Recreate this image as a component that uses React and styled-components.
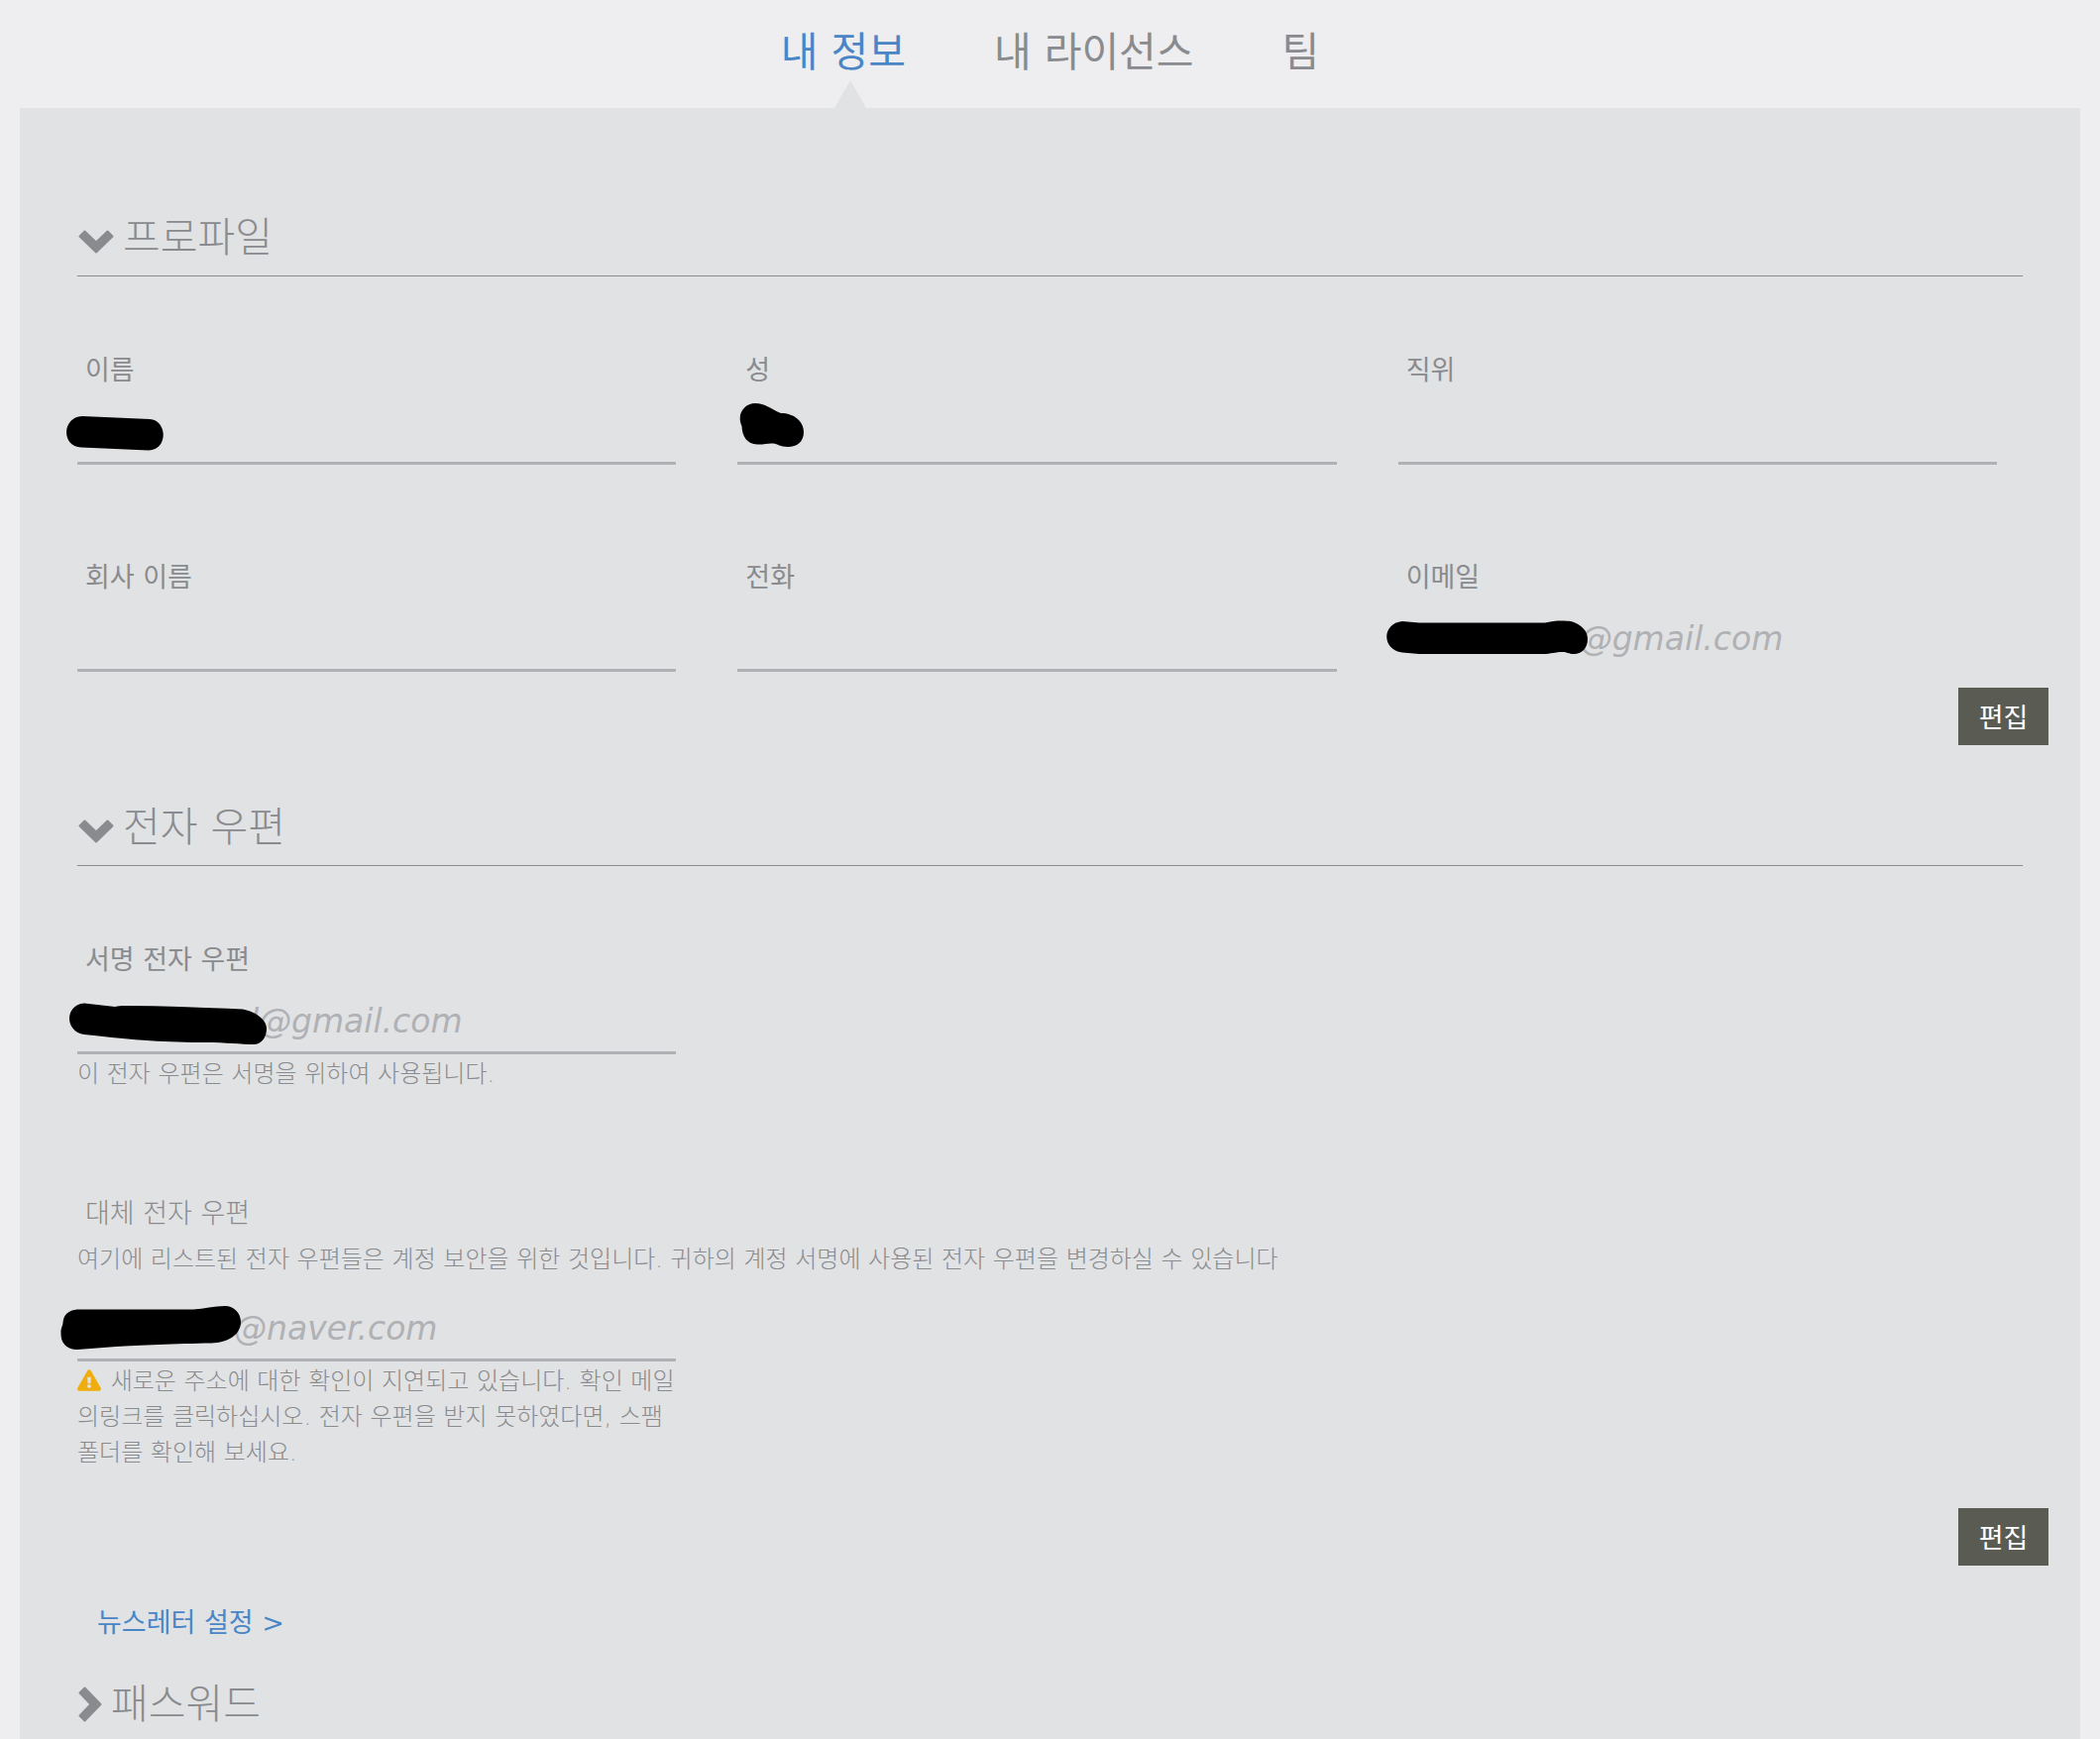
import React, { useState } from "react";
import styled, { createGlobalStyle } from "styled-components";
import { FaExclamationTriangle } from "react-icons/fa";

const colors = {
  page: "#eeeef0",
  panel: "#e1e2e4",
  text: "#8a8b8e",
  value: "#b0b1b4",
  rule: "#8a8b8e",
  link: "#4a86c5",
  button: "#5a5c54",
  warning: "#f0ad0e",
};

const GlobalStyle = createGlobalStyle`
  *, *::before, *::after { box-sizing: border-box; }
  body {
    margin: 0;
    background: ${colors.page};
    color: ${colors.text};
    font-family: "DejaVu Sans", "Noto Sans CJK KR", sans-serif;
    font-size: 24px;
    line-height: 36px;
  }
`;

const Page = styled.div`
  display: flex;
  flex-direction: column;
  min-height: 100vh;
  padding: 0 20px;
`;

const TabBar = styled.nav`
  display: flex;
  justify-content: center;
  gap: 89px;
  height: 109px;
  padding-top: 29px;
`;

const Tab = styled.a`
  position: relative;
  color: ${(p) => (p.$active ? colors.link : colors.text)};
  font-size: 41px;
  line-height: 48px;
  text-decoration: none;

  &::after {
    content: "";
    display: ${(p) => (p.$active ? "block" : "none")};
    position: absolute;
    left: 54px;
    bottom: 0;
    border: 16px solid transparent;
    border-top: 0;
    border-bottom: 28px solid ${colors.panel};
  }
`;

const Panel = styled.main`
  flex: 1;
  padding: 107px 22px 0 58px;
  background: ${colors.panel};
`;

const Section = styled.section`
  margin-top: ${(p) => p.$gap || 0}px;
`;

const SectionHeading = styled.h2`
  margin: 0 36px 0 0;
  padding-bottom: ${(p) => (p.$open ? 14 : 0)}px;
  border-bottom: ${(p) => (p.$open ? `1px solid ${colors.rule}` : "0")};
  font-weight: 300;
`;

const Toggle = styled.button`
  display: flex;
  align-items: center;
  gap: 9px;
  padding: 0 0 0 1px;
  border: 0;
  background: none;
  color: inherit;
  font: inherit;
  font-size: 41px;
  line-height: 48px;
  cursor: pointer;
`;

const ChevronSvg = styled.svg`
  display: block;
  flex: none;
  margin-top: ${(p) => (p.$down ? 8 : 0)}px;
  fill: currentColor;
  stroke: currentColor;
  stroke-width: 2;
  stroke-linejoin: round;
`;

const Fields = styled.div`
  display: grid;
  grid-template-columns: repeat(3, 1fr);
  row-gap: 96px;
  padding-top: ${(p) => p.$top || 0}px;
`;

const FieldBox = styled.div`
  padding-right: 62px;
`;

const Label = styled.label`
  display: block;
  padding-left: 8px;
  font-size: 27px;
  font-weight: ${(p) => (p.$light ? 300 : 400)};
`;

const InputWrap = styled.div`
  position: relative;
  margin-top: ${(p) => p.$gap}px;
`;

const Input = styled.input`
  display: block;
  width: 100%;
  height: 65px;
  padding: 0 0 0 ${(p) => p.$indent || 0}px;
  border: 0;
  border-bottom: 3px solid ${(p) => (p.$plain ? "transparent" : colors.value)};
  outline: 0;
  background: transparent;
  color: ${colors.value};
  font-family: inherit;
  font-size: 33px;
  font-style: italic;
`;

const Mask = styled.svg`
  position: absolute;
  left: -20px;
  top: 0;
  pointer-events: none;
`;

const Note = styled.p`
  margin: ${(p) => p.$gap}px 0 0;
  font-weight: 300;
`;

const WarningIcon = styled(FaExclamationTriangle)`
  width: 24px;
  height: 22px;
  margin-right: 2px;
  vertical-align: -2px;
  color: ${colors.warning};
`;

const Actions = styled.div`
  display: flex;
  justify-content: flex-end;
  margin: ${(p) => p.$gap}px 10px 0 0;
`;

const EditButton = styled.button`
  width: 91px;
  height: 58px;
  padding: 0 0 2px;
  border: 0;
  background: ${colors.button};
  color: #fff;
  font-family: inherit;
  font-size: 27px;
  cursor: pointer;
`;

const MoreLink = styled.a`
  display: block;
  width: fit-content;
  margin: 40px 0 0 20px;
  color: ${colors.link};
  font-size: 27px;
  text-decoration: none;
`;

function Chevron({ open }) {
  return open ? (
    <ChevronSvg $down width="36" height="24" viewBox="-1 -1 36 24" aria-hidden="true">
      <path d="M5.5 0.5 L0.5 5.5 L17 21.5 L33.5 5.5 L28.5 0.5 L17 11.5 Z" />
    </ChevronSvg>
  ) : (
    <ChevronSvg width="24" height="36" viewBox="-1 -1 24 36" aria-hidden="true">
      <path d="M5.5 0.5 L0.5 5.5 L11.5 17 L0.5 28.5 L5.5 33.5 L21.5 17 Z" />
    </ChevronSvg>
  );
}

function Heading({ title, open, onToggle }) {
  return (
    <SectionHeading $open={open}>
      <Toggle type="button" aria-expanded={open} onClick={onToggle}>
        <Chevron open={open} />
        {title}
      </Toggle>
    </SectionHeading>
  );
}

function ValueInput({ id, value, indent, plain, mask, gap }) {
  return (
    <InputWrap $gap={gap}>
      <Input id={id} type="text" defaultValue={value} $indent={indent} $plain={plain} />
      {mask && (
        <Mask width="240" height="65" viewBox="0 0 240 65" aria-hidden="true">
          <path d={mask} />
        </Mask>
      )}
    </InputWrap>
  );
}

function Field({ id, label, children, ...input }) {
  return (
    <FieldBox>
      <Label htmlFor={id}>{label}</Label>
      <ValueInput id={id} gap={12} {...input} />
      {children}
    </FieldBox>
  );
}

const masks = {
  firstName:
    "M25 16 L93 19 C111 20 112 50 92 50.5 L24 47.5 C4 47 4 17 25 16 Z",
  lastName:
    "M38 3 C48 3 54 9 64 13 C77 13 87 21 87 32 C87 42 80 47 71 47 C63 47 61 44 56 43.5 C51 43 46 45 40 44.5 C30 44 25 37 24.5 26 C19 14 27 3 38 3 Z",
  email:
    "M24 14 L41 15.5 L168 15.5 C176 13 188 13 194 14 C205 17 211 24 211 32 C211 41 205 47 197 47 C192 47 190 45 186 45 C178 45 174 47 166 47 L41 47 L24 45.5 C3 43 3 16 24 14 Z",
  signing:
    "M27 13.5 L58 17 C62 16 64 16 70 16 C110 16 150 18 187 19.5 C200 22 211 30 211 39 C211 49 205 55 198 55 C185 55 170 53 150 53 C110 53 80 51 27 45 C7 42 7 15 27 13.5 Z",
  alternate:
    "M20 12.5 L137 12.5 C148 12 158 9 169 9 C178 9 185 16 185 25 C185 38 172 46 155 46.5 C120 47 80 49 59 50 L20 53 C9 53 3 46 3.5 36 C3 32 5 30 5.5 26 C6 18 11 13 20 12.5 Z",
};

export default function App() {
  const [open, setOpen] = useState({ profile: true, mail: true, password: false });
  const toggle = (key) => () => setOpen((s) => ({ ...s, [key]: !s[key] }));

  return (
    <>
      <GlobalStyle />
      <Page lang="ko">
        <TabBar>
          <Tab href="#info" $active aria-current="page">내 정보</Tab>
          <Tab href="#license">내 라이선스</Tab>
          <Tab href="#team">팀</Tab>
        </TabBar>
        <Panel>
          <Section>
            <Heading title="프로파일" open={open.profile} onToggle={toggle("profile")} />
            {open.profile && (
              <>
                <Fields $top={77}>
                  <Field id="first-name" label="이름" mask={masks.firstName} />
                  <Field id="last-name" label="성" mask={masks.lastName} />
                  <Field id="position" label="직위" />
                  <Field id="company" label="회사 이름" />
                  <Field id="phone" label="전화" />
                  <Field id="email" label="이메일" value="@gmail.com" indent={183} plain mask={masks.email} />
                </Fields>
                <Actions $gap={16}>
                  <EditButton type="button">편집</EditButton>
                </Actions>
              </>
            )}
          </Section>
          <Section $gap={59}>
            <Heading title="전자 우편" open={open.mail} onToggle={toggle("mail")} />
            {open.mail && (
              <>
                <Fields $top={77}>
                  <Field id="signing" label="서명 전자 우편" value="d@gmail.com" indent={162} mask={masks.signing}>
                    <Note $gap={2}>이 전자 우편은 서명을 위하여 사용됩니다.</Note>
                  </Field>
                </Fields>
                <Section $gap={105}>
                  <Label htmlFor="alternate" $light>대체 전자 우편</Label>
                  <Note $gap={10}>
                    여기에 리스트된 전자 우편들은 계정 보안을 위한 것입니다. 귀하의 계정 서명에 사용된 전자 우편을 변경하실 수 있습니다
                  </Note>
                  <Fields>
                    <FieldBox>
                      <ValueInput id="alternate" value="@naver.com" indent={158} mask={masks.alternate} gap={20} />
                      <Note $gap={2}>
                        <WarningIcon aria-hidden="true" /> 새로운 주소에 대한 확인이 지연되고 있습니다. 확인 메일의링크를
                        클릭하십시오. 전자 우편을 받지 못하였다면, 스팸 폴더를 확인해 보세요.
                      </Note>
                    </FieldBox>
                  </Fields>
                </Section>
                <Actions $gap={38}>
                  <EditButton type="button">편집</EditButton>
                </Actions>
              </>
            )}
            <MoreLink href="#newsletter">뉴스레터 설정 &gt;</MoreLink>
          </Section>
          <Section $gap={40}>
            <Heading title="패스워드" open={open.password} onToggle={toggle("password")} />
          </Section>
        </Panel>
      </Page>
    </>
  );
}
